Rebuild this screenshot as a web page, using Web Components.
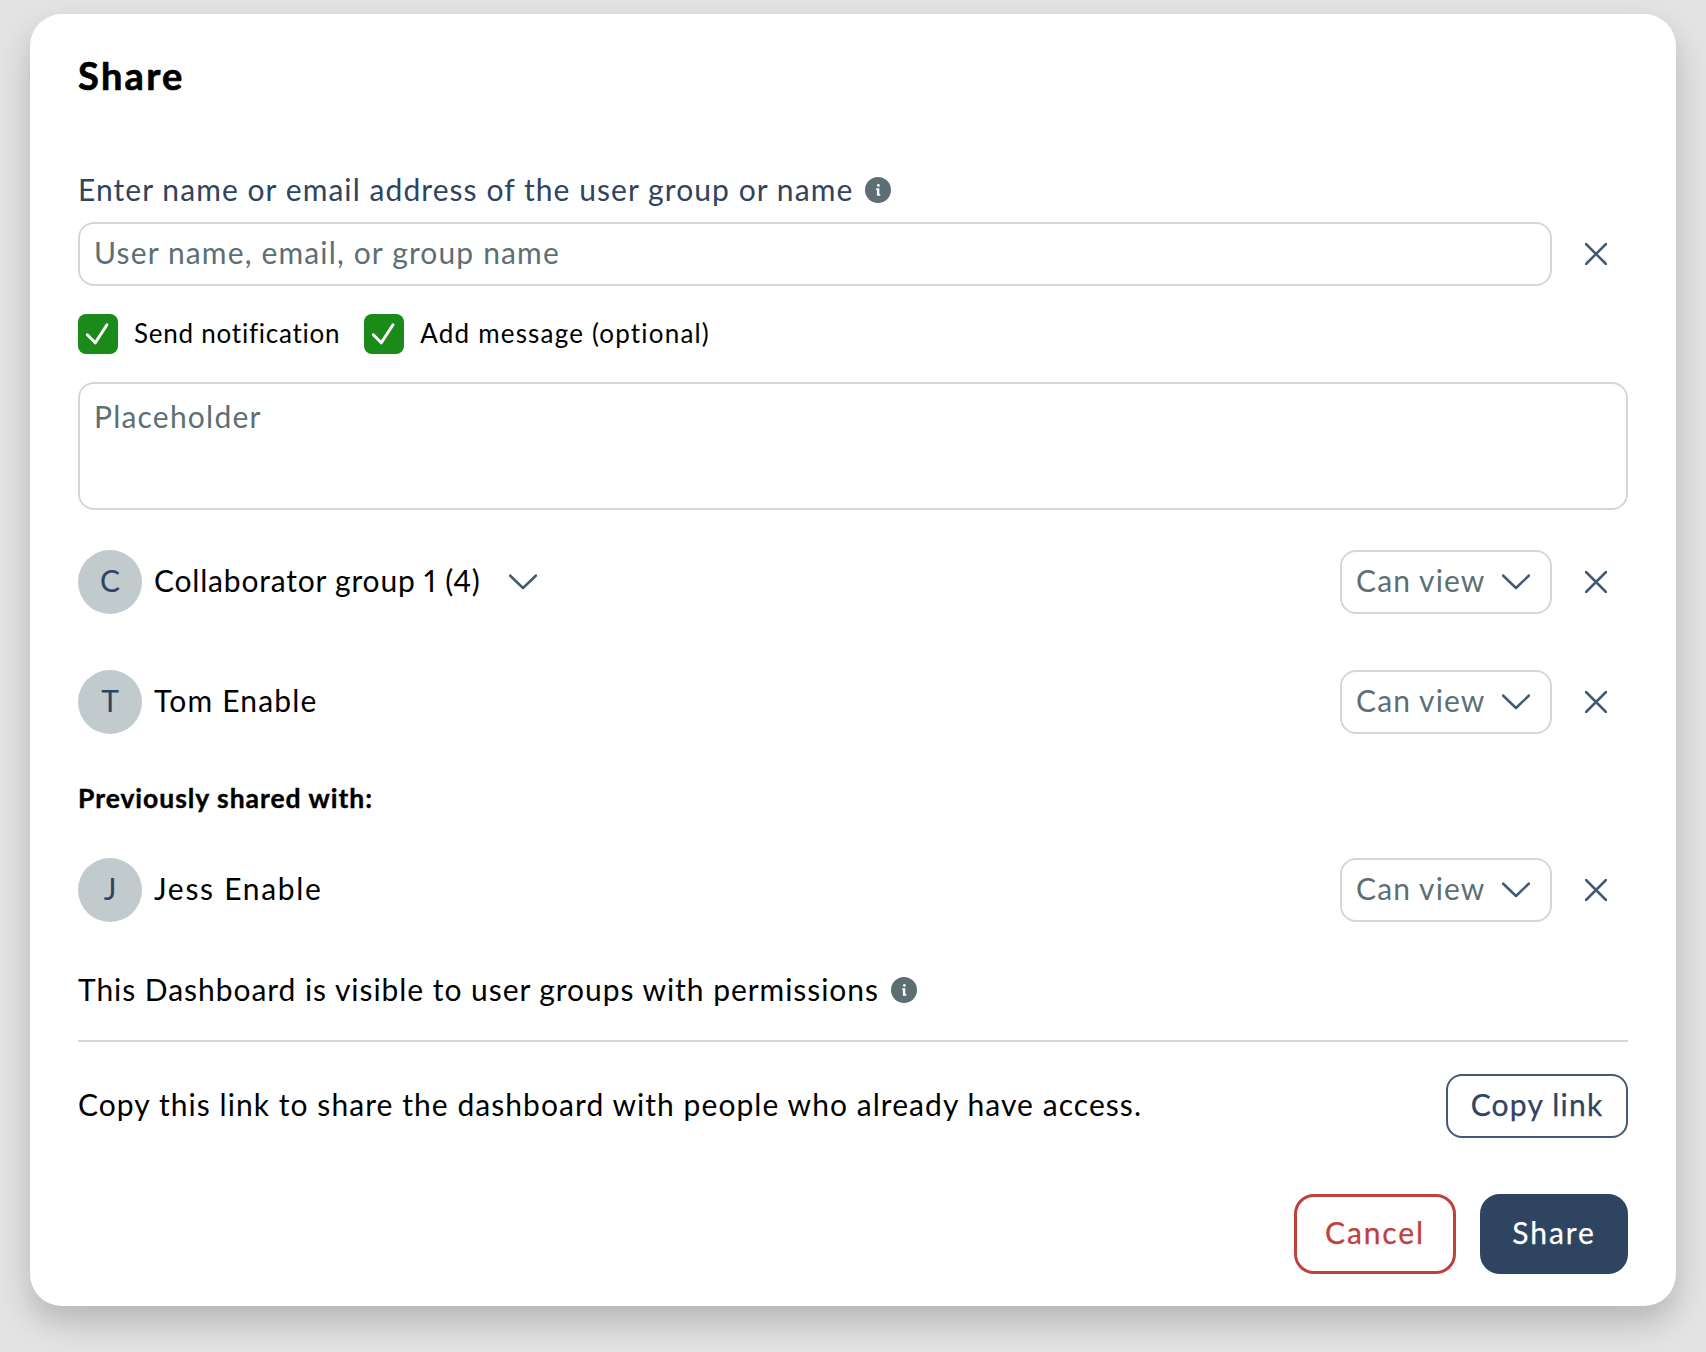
<!DOCTYPE html>
<html lang="en">
<head>
<meta charset="utf-8">
<title>Share</title>
<style>
  body {
    --navy: #2f4460;
    --slate: #5d6f74;
    --icon: #445974;
    --line: #d2d8da;
    margin: 0;
    background: #e3e3e3;
    color: #000;
    font: 400 30px/36px Lato, "Open Sans", sans-serif;
    font-variant-numeric: proportional-nums;
    letter-spacing: 1.06px;
  }
</style>
</head>
<body>
<share-dialog heading="Share">
  <field-label style="letter-spacing: 1.07px">Enter name or email address of the user group or name</field-label>
  <search-row></search-row>
  <check-group>
    <check-option style="letter-spacing: 0.76px">Send notification</check-option>
    <check-option style="letter-spacing: 1.19px">Add message (optional)</check-option>
  </check-group>
  <message-box></message-box>
  <share-person initial="C" group style="--spacing: 0.8px">Collaborator group 1 (4)</share-person>
  <share-person initial="T" style="--spacing: 1.18px; margin-top: 56px">Tom Enable</share-person>
  <section-title>Previously shared with:</section-title>
  <share-person initial="J" style="--spacing: 1.7px; margin-top: 44px">Jess Enable</share-person>
  <field-label style="--label-color: #000; --label-top: 48px; letter-spacing: 0.95px">This Dashboard is visible to user groups with permissions</field-label>
  <copy-link-row>Copy this link to share the dashboard with people who already have access.</copy-link-row>
  <app-button slot="actions" variant="danger">Cancel</app-button>
  <app-button slot="actions" variant="primary">Share</app-button>
</share-dialog>

<script>
const ICONS = {
  close: '<svg width="22" height="22" viewBox="0 0 22 22"><path d="M1 1l20 20M21 1L1 21"/></svg>',
  chevron: '<svg width="28" height="16" viewBox="0 0 28 16"><path d="M1 1.5l13 12.5L27 1.5"/></svg>',
  check: '<svg width="40" height="40" viewBox="0 0 40 40"><path d="M9.3 20.8l8 8L29 10.8"/></svg>',
  info: '<svg width="26" height="26" viewBox="0 0 26 26"><circle cx="13" cy="13" r="13"/><circle class="fg" cx="13.4" cy="8.4" r="1.4"/><path class="fg" d="M11.2 11.3h3.1v5.8h1v1.6h-3.4v-5.8h-.7z"/></svg>'
};

class ShareDialog extends HTMLElement {
  connectedCallback() {
    this.attachShadow({ mode: 'open' });
    this.shadowRoot.innerHTML = `
      <style>
        :host {
          display: block;
          box-sizing: border-box;
          min-height: 1352px;
          padding: 14px 30px 46px;
          overflow: hidden;
        }
        .card {
          display: flex;
          flex-direction: column;
          padding: 40px 48px 32px;
          border-radius: 32px;
          background: #fff;
          box-shadow: 0 16px 32px rgba(0, 0, 0, 0.2);
        }
        h1 {
          margin: 0;
          font-size: 38px;
          line-height: 43px;
          height: 44px;
          font-weight: 700;
          letter-spacing: 2.3px;
          -webkit-text-stroke: 0.7px;
        }
        footer {
          display: flex;
          justify-content: flex-end;
          gap: 24px;
          margin-top: 56px;
        }
      </style>
      <div class="card">
        <h1>${this.getAttribute('heading')}</h1>
        <slot></slot>
        <footer><slot name="actions"></slot></footer>
      </div>
    `;
  }
}
customElements.define('share-dialog', ShareDialog);

class FieldLabel extends HTMLElement {
  connectedCallback() {
    this.attachShadow({ mode: 'open' });
    this.shadowRoot.innerHTML = `
      <style>
        :host {
          display: flex;
          align-items: center;
          gap: 12px;
          height: 36px;
          margin-top: var(--label-top, 72px);
          color: var(--label-color, var(--navy));
        }
        span {
          padding-top: 2px;
        }
        svg {
          display: block;
          margin-top: 4px;
          fill: var(--slate);
        }
        .fg {
          fill: #fff;
        }
      </style>
      <span><slot></slot></span>
      ${ICONS.info}
    `;
  }
}
customElements.define('field-label', FieldLabel);

class CloseButton extends HTMLElement {
  connectedCallback() {
    this.attachShadow({ mode: 'open' });
    this.shadowRoot.innerHTML = `
      <style>
        :host {
          display: flex;
          flex: none;
          align-items: center;
          justify-content: center;
          width: 64px;
          height: 64px;
          margin-left: 12px;
        }
        svg {
          fill: none;
          stroke: var(--icon);
          stroke-width: 2.5;
          stroke-linecap: round;
        }
      </style>
      ${ICONS.close}
    `;
  }
}
customElements.define('close-button', CloseButton);

class SearchRow extends HTMLElement {
  connectedCallback() {
    this.attachShadow({ mode: 'open' });
    this.shadowRoot.innerHTML = `
      <style>
        :host {
          display: flex;
          margin-top: 16px;
        }
        .input {
          flex: 1;
          box-sizing: border-box;
          height: 64px;
          padding: 10px 14px;
          border: 2px solid var(--line);
          border-radius: 16px;
          color: var(--slate);
          letter-spacing: 1.15px;
        }
      </style>
      <div class="input">User name, email, or group name</div>
      <close-button></close-button>
    `;
  }
}
customElements.define('search-row', SearchRow);

class CheckGroup extends HTMLElement {
  connectedCallback() {
    this.attachShadow({ mode: 'open' });
    this.shadowRoot.innerHTML = `
      <style>
        :host {
          display: flex;
          gap: 24px;
          margin-top: 28px;
        }
      </style>
      <slot></slot>
    `;
  }
}
customElements.define('check-group', CheckGroup);

class CheckOption extends HTMLElement {
  connectedCallback() {
    this.attachShadow({ mode: 'open' });
    this.shadowRoot.innerHTML = `
      <style>
        :host {
          display: flex;
          gap: 16px;
          height: 40px;
          font-size: 26px;
          line-height: 38px;
        }
        .box {
          width: 40px;
          height: 40px;
          border-radius: 8px;
          background: #1a8a18;
        }
        svg {
          display: block;
          fill: none;
          stroke: #fff;
          stroke-width: 3;
          stroke-linecap: round;
          stroke-linejoin: round;
        }
      </style>
      <div class="box">${ICONS.check}</div>
      <span><slot></slot></span>
    `;
  }
}
customElements.define('check-option', CheckOption);

class MessageBox extends HTMLElement {
  connectedCallback() {
    this.attachShadow({ mode: 'open' });
    this.shadowRoot.innerHTML = `
      <style>
        :host {
          display: block;
          box-sizing: border-box;
          height: 128px;
          margin: 28px 0 40px;
          padding: 14px;
          border: 2px solid var(--line);
          border-radius: 16px;
          color: var(--slate);
          letter-spacing: 1.22px;
        }
      </style>
      <div>Placeholder</div>
    `;
  }
}
customElements.define('message-box', MessageBox);

class PermissionSelect extends HTMLElement {
  connectedCallback() {
    this.attachShadow({ mode: 'open' });
    this.shadowRoot.innerHTML = `
      <style>
        :host {
          display: flex;
          justify-content: space-between;
          box-sizing: border-box;
          width: 212px;
          height: 64px;
          padding: 10px 20px 0 14px;
          border: 2px solid var(--line);
          border-radius: 16px;
          color: var(--slate);
          letter-spacing: 1.1px;
        }
        svg {
          margin-top: 12px;
          fill: none;
          stroke: var(--icon);
          stroke-width: 2.5;
          stroke-linecap: round;
          stroke-linejoin: round;
        }
      </style>
      <span>Can view</span>
      ${ICONS.chevron}
    `;
  }
}
customElements.define('permission-select', PermissionSelect);

class SharePerson extends HTMLElement {
  connectedCallback() {
    this.attachShadow({ mode: 'open' });
    this.shadowRoot.innerHTML = `
      <style>
        :host {
          display: flex;
          height: 64px;
        }
        .avatar {
          width: 64px;
          height: 64px;
          margin-right: 12px;
          border-radius: 50%;
          background: #c1cacc;
          color: var(--navy);
          line-height: 61px;
          text-align: center;
          letter-spacing: 0;
        }
        .name {
          padding-top: 12px;
          letter-spacing: var(--spacing);
        }
        .name + svg {
          margin: 24px 0 0 28px;
          fill: none;
          stroke: var(--icon);
          stroke-width: 2.5;
          stroke-linecap: round;
          stroke-linejoin: round;
        }
        permission-select {
          margin-left: auto;
        }
      </style>
      <div class="avatar">${this.getAttribute('initial')}</div>
      <span class="name"><slot></slot></span>
      ${this.hasAttribute('group') ? ICONS.chevron : ''}
      <permission-select></permission-select>
      <close-button></close-button>
    `;
  }
}
customElements.define('share-person', SharePerson);

class SectionTitle extends HTMLElement {
  connectedCallback() {
    this.attachShadow({ mode: 'open' });
    this.shadowRoot.innerHTML = `
      <style>
        :host {
          display: block;
          margin-top: 48px;
          font-size: 26.5px;
          line-height: 32px;
          font-weight: 700;
          letter-spacing: 0.97px;
          -webkit-text-stroke: 0.4px;
        }
      </style>
      <slot></slot>
    `;
  }
}
customElements.define('section-title', SectionTitle);

class AppButton extends HTMLElement {
  connectedCallback() {
    this.attachShadow({ mode: 'open' });
    this.shadowRoot.innerHTML = `
      <style>
        :host {
          display: flex;
          justify-content: center;
          box-sizing: border-box;
          width: 182px;
          height: 64px;
          padding-top: 10px;
          border: 2px solid var(--icon);
          border-radius: 16px;
          color: var(--navy);
          letter-spacing: 1.2px;
          -webkit-text-stroke: 0.25px;
        }
        :host([variant]) {
          height: 80px;
          padding-top: 17px;
          border-width: 3px;
          border-radius: 20px;
          letter-spacing: 1.9px;
        }
        :host([variant="danger"]) {
          width: 162px;
          border-color: #bf403c;
          color: #bf403c;
        }
        :host([variant="primary"]) {
          width: 148px;
          border-color: var(--navy);
          background: var(--navy);
          color: #fff;
        }
      </style>
      <slot></slot>
    `;
  }
}
customElements.define('app-button', AppButton);

class CopyLinkRow extends HTMLElement {
  connectedCallback() {
    this.attachShadow({ mode: 'open' });
    this.shadowRoot.innerHTML = `
      <style>
        :host {
          display: flex;
          justify-content: space-between;
          margin-top: 34px;
          padding-top: 32px;
          border-top: 2px solid var(--line);
        }
        span {
          padding-top: 12px;
        }
      </style>
      <span><slot></slot></span>
      <app-button>Copy link</app-button>
    `;
  }
}
customElements.define('copy-link-row', CopyLinkRow);
</script>
</body>
</html>
